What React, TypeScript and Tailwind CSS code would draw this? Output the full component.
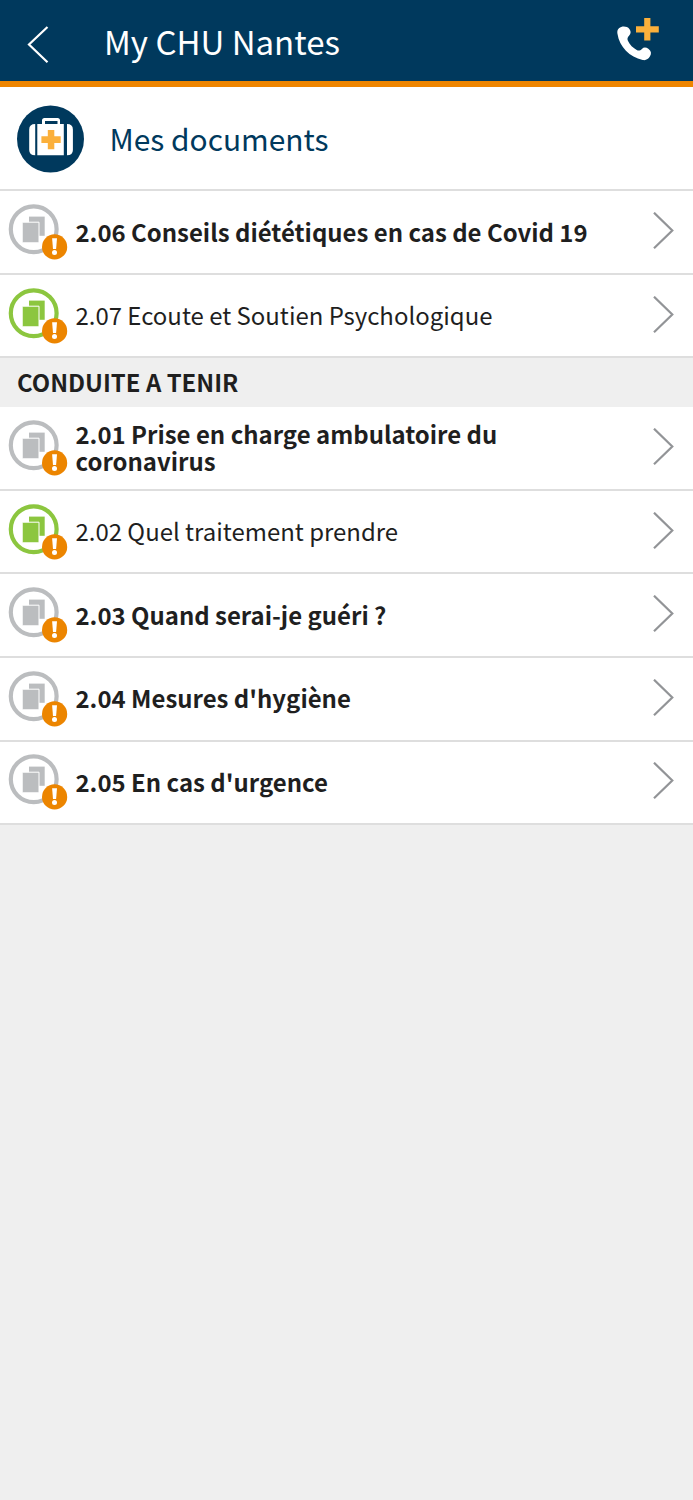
import React from "react";

type Item = { label: string; read: boolean };

const recent: Item[] = [
  { label: "2.06 Conseils diététiques en cas de Covid 19", read: false },
  { label: "2.07 Ecoute et Soutien Psychologique", read: true },
];

const conduct: Item[] = [
  { label: "2.01 Prise en charge ambulatoire du coronavirus", read: false },
  { label: "2.02 Quel traitement prendre", read: true },
  { label: "2.03 Quand serai-je guéri ?", read: false },
  { label: "2.04 Mesures d'hygiène", read: false },
  { label: "2.05 En cas d'urgence", read: false },
];

function DocumentIcon({ read }: { read: boolean }) {
  const color = read ? "#8cc63f" : "#bbbdbf";
  return (
    <svg className="h-[82px] w-[75.5px] shrink-0" viewBox="0 0.4 75.5 82" fill="none">
      <circle cx="33.7" cy="38.6" r="22.9" stroke={color} strokeWidth="4.2" />
      <path d="M29 26h15.7v19.2H29z" fill={color} />
      <path d="M22.2 31.6h16.8v20.6H22.2z" fill={color} stroke="#fff" strokeWidth="1" />
      <circle cx="54.6" cy="56.3" r="12.6" fill="#ec8500" />
      <path d="M52.1 47.6h4.9l-.9 10.9h-3.1z" fill="#fff" />
      <circle cx="54.5" cy="61.9" r="2.5" fill="#fff" />
    </svg>
  );
}

function Row({ item }: { item: Item }) {
  return (
    <li className="flex h-[83.65px] items-center border-b-2 border-[#dedede] bg-white">
      <DocumentIcon read={item.read} />
      <span
        className={
          item.read
            ? "w-[500px] whitespace-nowrap pb-[2px] text-[23.95px] leading-[27px]"
            : "w-[515px] pb-[2px] text-[23.95px] font-bold leading-[27px]"
        }
      >
        {item.label}
      </span>
      <svg className="ml-auto mr-[18px] h-[40px] w-[24px] shrink-0" viewBox="0 0.5 24 40" fill="none">
        <path d="M3 1.2L21.3 19L3 36.8" stroke="#929497" strokeWidth="2.2" />
      </svg>
    </li>
  );
}

export default function App() {
  return (
    <main className="min-h-[1500px] w-full bg-[#efefef] font-['Noto_Sans_CJK_SC',sans-serif] text-[#1f1f1f]">
      <header className="flex h-[87px] items-center border-b-[6px] border-[#ee8500] bg-[#00395d] text-white">
        <svg className="h-[81px] w-[104px] shrink-0" viewBox="0 0 104 81" fill="none">
          <path d="M47.5 27L29 44.5L47.5 62.2" stroke="#fff" strokeWidth="2.2" />
        </svg>
        <h1 className="mt-px whitespace-nowrap text-[33px] leading-[40px]">My CHU Nantes</h1>
        <svg className="ml-auto h-[81px] w-[83px] shrink-0" viewBox="610 0 83 81">
          <path
            d="M619 28.2c2.8-2.3 8-2.2 10.4.8 1.7 2.2 1.7 4.4-.2 6.6-1.6 1.8-2.2 3.2-1.3 5.2 1.7 3.8 5.2 7.4 9.2 9.4 1.800.9 3.300.2 4.800-1.300 1.700-1.700 4.200-1.700 6.400-.1 3 2.200 3.400 4.600 1.700 7.500-1.800 3-4 4.300-7.300 3.700-13-2.500-23.300-13-25.300-26.400-.3-2.400.1-4.200 1.600-5.400z"
            fill="#fff"
          />
          <path d="M644.2 18h6.2v8.2h8.400v6.2h-8.400v8h-6.200v-8h-8.200v-6.200h8.200z" fill="#fbb03b" />
        </svg>
      </header>

      <section className="flex h-[104.2px] items-center border-b-2 border-[#dedede] bg-white">
        <svg className="h-[102px] w-[109.5px] shrink-0" viewBox="0 87 109.5 102" fill="none">
          <circle cx="50.5" cy="139" r="33.5" fill="#00395d" />
          <path d="M42 124v-3.5q0-2.500 2.500-2.500h13q2.500 0 2.500 2.500v3.500h3.800v31.300H37.300V124zM45 121v3h12.500v-3z" fill="#fff" fillRule="evenodd" />
          <path d="M35.200 124v31.300q-6 0-6-5.300v-20.500q0-5.500 6-5.500zM67 124v31.300q5.900 0 5.900-5.300v-20.500q0-5.500-5.900-5.500z" fill="#fff" />
          <path d="M47.800 130h6.500v6.300h6.400v6.600h-6.400v6.400h-6.500v-6.400h-6.400v-6.600h6.400z" fill="#fbb03b" />
        </svg>
        <h2 className="whitespace-nowrap text-[29.9px] leading-[40px] text-[#00395d]">Mes documents</h2>
      </section>

      <ul>
        {recent.map((item) => (
          <Row key={item.label} item={item} />
        ))}
      </ul>
      <h3 className="flex h-[48.6px] items-center whitespace-nowrap pb-[2px] pl-[17px] text-[23.9px] font-bold leading-[30px]">
        CONDUITE A TENIR
      </h3>
      <ul>
        {conduct.map((item) => (
          <Row key={item.label} item={item} />
        ))}
      </ul>
    </main>
  );
}
